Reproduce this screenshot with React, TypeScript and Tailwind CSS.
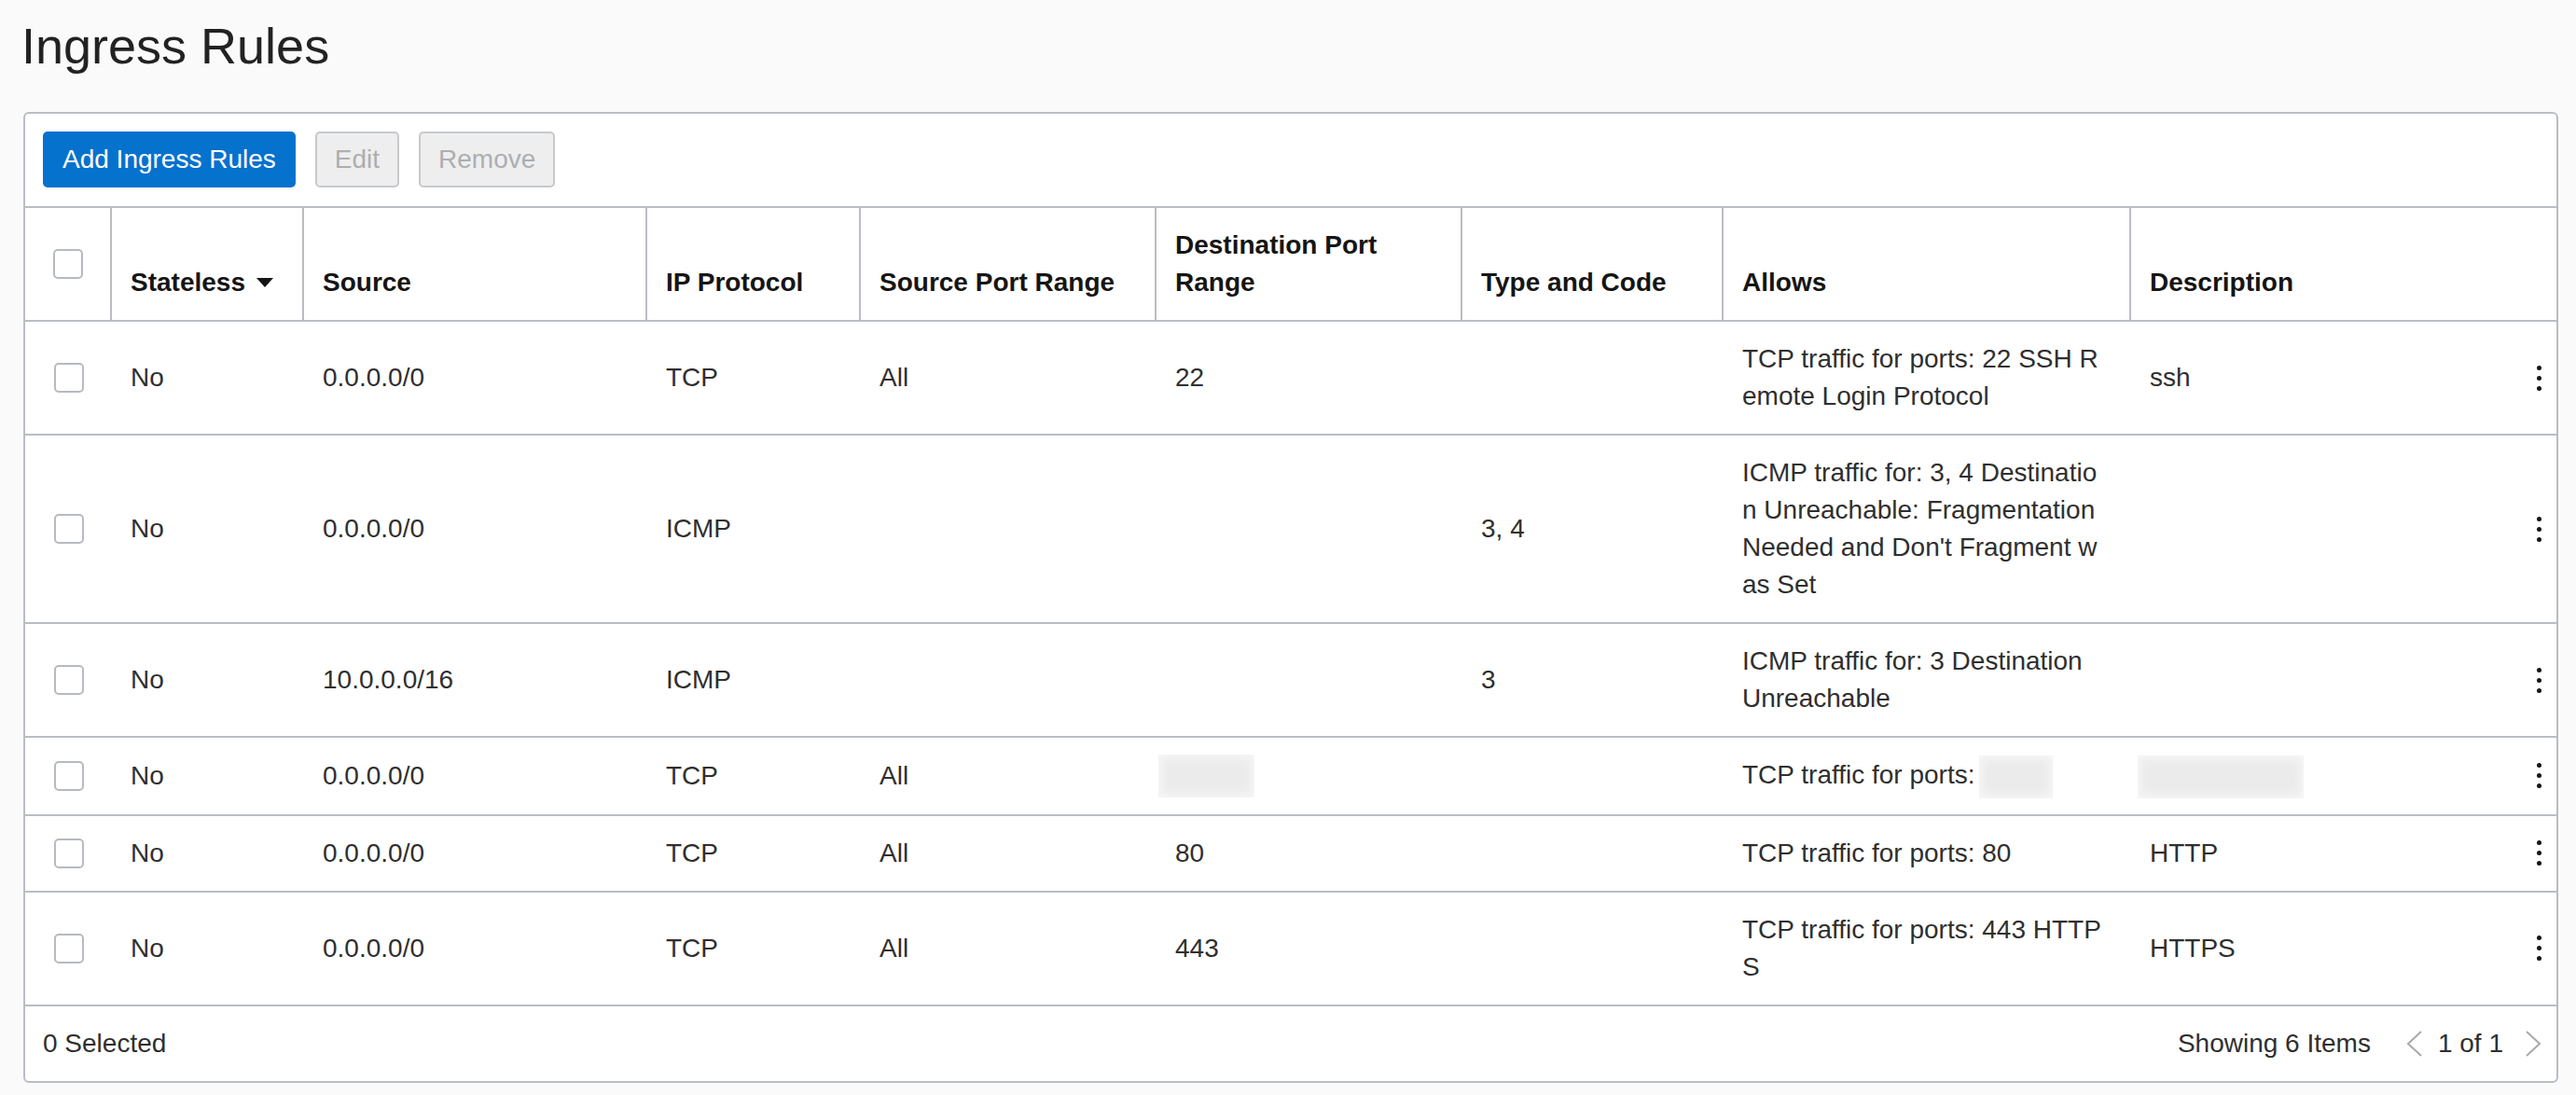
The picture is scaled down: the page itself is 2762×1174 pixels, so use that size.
import { Fragment } from 'react'

type Rule = {
  stateless: string
  source: string
  protocol: string
  sourcePort: string
  destPort: string
  typeCode: string
  allows: string[]
  description: string
  redacted?: boolean
}

const rules: Rule[] = [
  { stateless: 'No', source: '0.0.0.0/0', protocol: 'TCP', sourcePort: 'All', destPort: '22', typeCode: '', allows: ['TCP traffic for ports: 22 SSH R', 'emote Login Protocol'], description: 'ssh' },
  { stateless: 'No', source: '0.0.0.0/0', protocol: 'ICMP', sourcePort: '', destPort: '', typeCode: '3, 4', allows: ['ICMP traffic for: 3, 4 Destinatio', 'n Unreachable: Fragmentation', "Needed and Don't Fragment w", 'as Set'], description: '' },
  { stateless: 'No', source: '10.0.0.0/16', protocol: 'ICMP', sourcePort: '', destPort: '', typeCode: '3', allows: ['ICMP traffic for: 3 Destination', 'Unreachable'], description: '' },
  { stateless: 'No', source: '0.0.0.0/0', protocol: 'TCP', sourcePort: 'All', destPort: '', typeCode: '', allows: ['TCP traffic for ports:'], description: '', redacted: true },
  { stateless: 'No', source: '0.0.0.0/0', protocol: 'TCP', sourcePort: 'All', destPort: '80', typeCode: '', allows: ['TCP traffic for ports: 80'], description: 'HTTP' },
  { stateless: 'No', source: '0.0.0.0/0', protocol: 'TCP', sourcePort: 'All', destPort: '443', typeCode: '', allows: ['TCP traffic for ports: 443 HTTP', 'S'], description: 'HTTPS' },
]

const cols = 'grid grid-cols-[93px_206px_368px_229px_317px_328px_280px_437px_1fr]'

function Checkbox() {
  return <div className="w-[32px] h-[32px] rounded-[5px] border-2 border-[#b6bac1] bg-white"></div>
}

// blurred-out value, kept to the 40px line box
function Redacted({ w, className = '' }: { w: string; className?: string }) {
  return (
    <span className={`inline-block h-[46px] -my-[3px] align-middle bg-[#ebebeb] shadow-[inset_0_0_10px_4px_#f6f6f6] ${w} ${className}`}></span>
  )
}

function Chevron({ dir }: { dir: 'left' | 'right' }) {
  return (
    <svg width="22" height="28" viewBox="0 0 22 28" className="shrink-0">
      <polyline
        points={dir === 'left' ? '18,1 4,14 18,27' : '4,1 18,14 4,27'}
        fill="none"
        stroke="#a7a9ac"
        strokeWidth="2"
      />
    </svg>
  )
}

export default function App() {
  const head = 'flex items-end px-[20px] pb-[20px] border-r-2 border-[#b9bdc4]'
  const cell = 'flex items-center px-[20px] py-[20px]'

  return (
    <div
      className="min-h-screen bg-[#fafafa] pl-[25px] pr-[19px] pt-[22px] pb-[16px] text-[28px] leading-[40px] text-[#2f2f2f]"
      style={{ fontFamily: '"Liberation Sans", Arial, sans-serif' }}
    >
      <h1 className="text-[54px] leading-[54px] text-[#222222] -ml-[2px]">Ingress Rules</h1>

      <div className="mt-[44px] bg-white border-2 border-[#b9bdc4] rounded-[6px] overflow-hidden">
        {/* toolbar */}
        <div className="flex items-center gap-[21px] pl-[19px] pt-[19px] pb-[20px] border-b-2 border-[#b9bdc4]">
          <button className="h-[60px] px-[19px] rounded-[5px] border-2 border-[#0572ce] bg-[#0572ce] text-white">Add Ingress Rules</button>
          <button className="h-[60px] px-[19px] rounded-[5px] border-2 border-[#c6c9cd] bg-[#eeeeee] text-[#acaeb1]">Edit</button>
          <button className="h-[60px] px-[19px] rounded-[5px] border-2 border-[#c6c9cd] bg-[#eeeeee] text-[#acaeb1]">Remove</button>
        </div>

        {/* header */}
        <div className={`${cols} h-[122px] border-b-2 border-[#b9bdc4] font-bold text-[#161513]`}>
          <div className="flex items-center justify-center border-r-2 border-[#b9bdc4]">
            <Checkbox />
          </div>
          <div className={head}>
            <span>Stateless</span>
            <svg width="18" height="10" viewBox="0 0 18 10" className="ml-[12px] mb-[15px]">
              <polygon points="0,0 18,0 9,10" fill="#161513" />
            </svg>
          </div>
          <div className={head}>Source</div>
          <div className={head}>IP Protocol</div>
          <div className={head}>Source Port Range</div>
          <div className={head}>
            <span>
              Destination Port
              <br />
              Range
            </span>
          </div>
          <div className={head}>Type and Code</div>
          <div className={head}>Allows</div>
          <div className="flex items-end px-[20px] pb-[20px]">Description</div>
        </div>

        {/* rows */}
        {rules.map((r, i) => (
          <div key={i} className={`${cols} border-b-2 border-[#b9bdc4]`}>
            <div className="flex items-center justify-center">
              <Checkbox />
            </div>
            <div className={cell}>{r.stateless}</div>
            <div className={cell}>{r.source}</div>
            <div className={cell}>{r.protocol}</div>
            <div className={cell}>{r.sourcePort}</div>
            <div className={cell}>
              {r.redacted ? <Redacted w="w-[103px]" className="-ml-[18px]" /> : r.destPort}
            </div>
            <div className={cell}>{r.typeCode}</div>
            <div className={cell}>
              <div>
                {r.allows.map((line, j) => (
                  <Fragment key={j}>
                    <div className="whitespace-nowrap">
                      {line}
                      {r.redacted && <Redacted w="w-[79px]" className="ml-[5px]" />}
                    </div>
                  </Fragment>
                ))}
              </div>
            </div>
            <div className="flex items-center justify-between pl-[20px] pr-[16px] py-[20px]">
              <div>{r.redacted ? <Redacted w="w-[178px]" className="-ml-[13px]" /> : r.description}</div>
              <div className="flex flex-col gap-[6px]">
                <span className="w-[5px] h-[5px] rounded-full bg-[#161513]"></span>
                <span className="w-[5px] h-[5px] rounded-full bg-[#161513]"></span>
                <span className="w-[5px] h-[5px] rounded-full bg-[#161513]"></span>
              </div>
            </div>
          </div>
        ))}

        {/* footer */}
        <div className="flex items-center justify-between h-[80px] pl-[19px] pr-[14px]">
          <span>0 Selected</span>
          <div className="flex items-center">
            <span>Showing 6 Items</span>
            <span className="ml-[36px]"><Chevron dir="left" /></span>
            <span className="ml-[14px]">1 of 1</span>
            <span className="ml-[21px]"><Chevron dir="right" /></span>
          </div>
        </div>
      </div>
    </div>
  )
}
